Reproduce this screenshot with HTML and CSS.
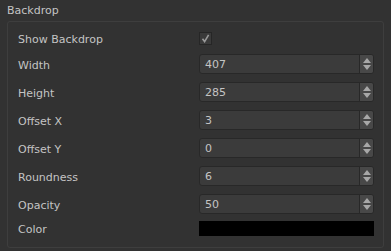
FILE: index.html
```html
<!DOCTYPE html>
<html lang="en">
<head>
  <meta charset="UTF-8" />
  <title>Backdrop</title>
  <link rel="stylesheet" href="styles.css">
</head>
<body>
  <div class="panel-title">Backdrop</div>
  <div class="group">
    <div class="row row-check">
      <span class="label">Show Backdrop</span>
      <span class="check">
        <svg width="9" height="9" viewBox="0 0 9 9"><path d="M1.5 4.8 L3.6 7.6 L7.6 0.8" fill="none" stroke="#9a9a9a" stroke-width="1.6"/></svg>
      </span>
    </div>
    <div class="row">
      <span class="label">Width</span>
      <div class="spin"><span class="value">407</span><span class="arrows"><i class="up"></i><i class="down"></i></span></div>
    </div>
    <div class="row">
      <span class="label">Height</span>
      <div class="spin"><span class="value">285</span><span class="arrows"><i class="up"></i><i class="down"></i></span></div>
    </div>
    <div class="row">
      <span class="label">Offset X</span>
      <div class="spin"><span class="value">3</span><span class="arrows"><i class="up"></i><i class="down"></i></span></div>
    </div>
    <div class="row">
      <span class="label">Offset Y</span>
      <div class="spin"><span class="value">0</span><span class="arrows"><i class="up"></i><i class="down"></i></span></div>
    </div>
    <div class="row">
      <span class="label">Roundness</span>
      <div class="spin"><span class="value">6</span><span class="arrows"><i class="up"></i><i class="down"></i></span></div>
    </div>
    <div class="row">
      <span class="label">Opacity</span>
      <div class="spin"><span class="value">50</span><span class="arrows"><i class="up"></i><i class="down"></i></span></div>
    </div>
    <div class="row row-color">
      <span class="label">Color</span>
      <div class="swatch"></div>
    </div>
  </div>
</body>
</html>
```

FILE: styles.css
```css
body { margin: 0; background: #323232; color: #c4c4c4; font-family: "DejaVu Sans", Verdana, sans-serif; font-size: 11px; }
.panel-title { height: 21px; line-height: 22px; padding-left: 7px; }
.group { margin-left: 7px; width: 377px; border: 1px solid #3e3e3e; border-radius: 3px; padding: 10px 0 0 10px; box-sizing: border-box; height: 227px; }
.row { display: flex; align-items: center; height: 20px; margin-bottom: 8px; }
.row-check { height: 13px; margin-bottom: 9px; }
.row-color { height: 15px; margin-top: -1px; }
.label { width: 181px; flex: none; padding-top: 2px; }
.check { width: 11px; height: 11px; border: 1px solid #262626; background: #3a3a3a; display: flex; align-items: center; justify-content: center; }
.spin { width: 175px; height: 20px; box-sizing: border-box; border: 1px solid #282828; border-radius: 3px; background: #3b3b3b; display: flex; }
.value { flex: 1; padding-left: 5px; line-height: 20px; }
.arrows { width: 13px; border-left: 1px solid #282828; background: #484848; display: flex; flex-direction: column; align-items: center; justify-content: center; gap: 2px; border-radius: 0 2px 2px 0; }
.arrows i { width: 0; height: 0; border-left: 4px solid transparent; border-right: 4px solid transparent; }
.arrows .up { border-bottom: 5px solid #a8a8a8; }
.arrows .down { border-top: 5px solid #a8a8a8; }
.swatch { width: 175px; height: 15px; background: #000; }
```
